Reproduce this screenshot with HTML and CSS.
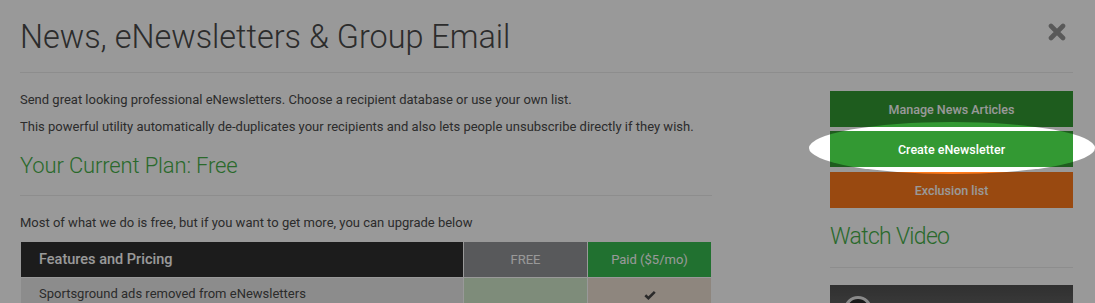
FILE: index.html
```html
<!DOCTYPE html>
<html lang="en">
<head>
<meta charset="utf-8">
<title>News, eNewsletters &amp; Group Email</title>
<link rel="stylesheet" href="styles.css">
</head>
<body>
<div class="modal">
  <header class="modal-header">
    <h1 class="modal-title">News, eNewsletters &amp; Group Email</h1>
    <button class="close" aria-label="Close">
      <svg width="18" height="18" viewBox="0 0 18 18"><path d="M3 3 L15 15 M15 3 L3 15" stroke="currentColor" stroke-width="4.6" stroke-linecap="round"/></svg>
    </button>
  </header>
  <div class="modal-body">
    <div class="main-col">
      <p class="text">Send great looking professional eNewsletters. Choose a recipient database or use your own list.</p>
      <p class="text">This powerful utility automatically de-duplicates your recipients and also lets people unsubscribe directly if they wish.</p>
      <h2 class="section-title plan-title">Your Current Plan: Free</h2>
      <p class="text intro">Most of what we do is free, but if you want to get more, you can upgrade below</p>
      <table class="pricing">
        <colgroup><col><col class="plan-col"><col class="plan-col"></colgroup>
        <thead>
          <tr>
            <th class="feature-head">Features and Pricing</th>
            <th class="free-head">FREE</th>
            <th class="paid-head">Paid ($5/mo)</th>
          </tr>
        </thead>
        <tbody>
          <tr>
            <td class="feature">Sportsground ads removed from eNewsletters</td>
            <td class="free-cell"></td>
            <td class="paid-cell"><svg width="12" height="10" viewBox="0 0 12 10"><path d="M1.3 5.2 L4.4 8.2 L10.8 1.8" fill="none" stroke="currentColor" stroke-width="2.6"/></svg></td>
          </tr>
        </tbody>
      </table>
    </div>
    <aside class="side-col">
      <a class="btn btn-dark-green">Manage News Articles</a>
      <a class="btn btn-green">Create eNewsletter<span class="spotlight"></span></a>
      <a class="btn btn-orange">Exclusion list</a>
      <h2 class="section-title video-title">Watch Video</h2>
      <div class="video">
        <span class="avatar"></span>
      </div>
    </aside>
  </div>
</div>
</body>
</html>
```
FILE: styles.css
```css
html, body {
  margin: 0;
  padding: 0;
  background: #fff;
  overflow: hidden;
}

body {
  font-family: Roboto, "Liberation Sans", sans-serif;
  color: #4a4a4a;
}

.modal {
  padding: 0 22px 0 20px;
}

.modal-header {
  display: flex;
  justify-content: space-between;
  align-items: flex-start;
  padding: 19px 0 17px;
  border-bottom: 1px solid #ececec;
}

.modal-title {
  margin: 0;
  font-size: 32.4px;
  font-weight: 300;
  line-height: 36px;
  color: #4a4a4a;
}

.close {
  margin: 4px 7px 0 0;
  padding: 0;
  border: 0;
  background: none;
  color: #959595;
  width: 18px;
  height: 18px;
  display: block;
}

.close svg {
  display: block;
}

.modal-body {
  display: flex;
  justify-content: space-between;
  padding-top: 18px;
}

.main-col {
  width: 692px;
  display: flex;
  flex-direction: column;
}

.side-col {
  width: 243px;
  display: flex;
  flex-direction: column;
}

.text {
  margin: 0 0 9px;
  font-size: 13px;
  line-height: 18px;
}

.section-title {
  margin: 0;
  font-weight: 300;
  color: #46b049;
  border-bottom: 1px solid #ececec;
}

.plan-title {
  margin-top: 8px;
  font-size: 22px;
  line-height: 26px;
  padding-bottom: 16px;
  letter-spacing: -0.15px;
}

.text.intro {
  margin: 18px 0 9px;
}

.pricing {
  width: 692px;
  border-collapse: collapse;
  font-size: 13px;
}

.plan-col {
  width: 124px;
}

.pricing th,
.pricing td {
  border: 1px solid #fff;
}

.pricing th {
  height: 35px;
  padding: 0 18px;
  font-weight: 400;
  color: #fff;
  text-align: center;
}

.pricing th.feature-head {
  text-align: left;
  font-size: 14.5px;
  font-weight: 500;
  background: #303030;
}

.free-head {
  background: #939598;
}

.paid-head {
  background: #37bd51;
}

.pricing td {
  padding: 7px 18px;
  line-height: 18px;
}

.feature {
  background: #e9e9e9;
  color: #4a4a4a;
}

.free-cell {
  background: #d2e9cb;
}

.paid-cell {
  background: #eddfd3;
  color: #474747;
  text-align: center;
}

.paid-cell svg {
  display: inline-block;
  vertical-align: middle;
}

.btn {
  position: relative;
  display: flex;
  align-items: center;
  justify-content: center;
  height: 36px;
  margin-bottom: 4px;
  font-size: 12.5px;
  font-weight: 500;
  color: #fff;
  text-decoration: none;
}

.btn-dark-green,
.btn-green {
  background: #339933;
}

.btn-green {
  margin-bottom: 5px;
}

.btn-orange {
  background: #ff7b1b;
  margin-bottom: 0;
}

.spotlight {
  position: absolute;
  left: -21px;
  right: -22px;
  top: -9px;
  bottom: -7px;
  border-radius: 50%;
  box-shadow: 0 0 0 2400px rgba(0, 0, 0, 0.4);
  pointer-events: none;
  z-index: 10;
}

.video-title {
  margin-top: 15px;
  font-size: 23px;
  line-height: 28px;
  letter-spacing: -0.7px;
  padding-bottom: 16px;
}

.video {
  margin-top: 17px;
  height: 137px;
  background: linear-gradient(to bottom, #505050 0, #707070 40px, #7a7a7a 100%);
  position: relative;
}

.avatar {
  position: absolute;
  left: 14px;
  top: 11px;
  width: 22px;
  height: 22px;
  border: 3px solid #e6e6e6;
  border-radius: 50%;
  background: #2a2a2a;
}
```
